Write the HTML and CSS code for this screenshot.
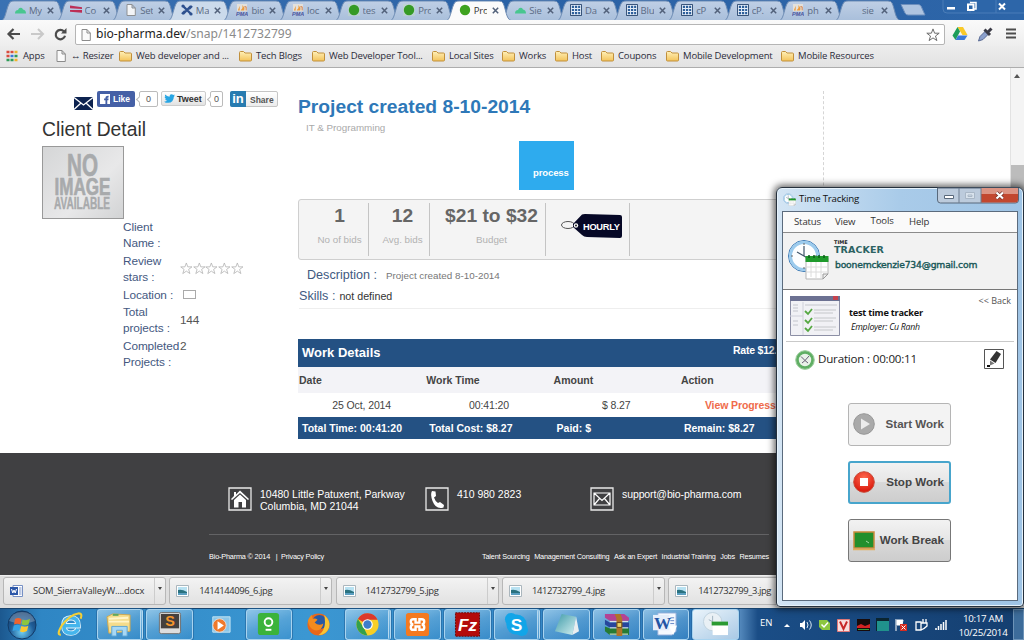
FILE: index.html
```html
<!DOCTYPE html>
<html lang="en">
<head>
<meta charset="utf-8">
<title>Project created 8-10-2014</title>
<link rel="stylesheet" href="styles.css">
</head>
<body>
<svg class="defs" width="0" height="0">
  <defs>
    <linearGradient id="gTab" x1="0" y1="0" x2="0" y2="1"><stop offset="0" stop-color="#bfcfe5"/><stop offset="1" stop-color="#a9bfdb"/></linearGradient>
    <linearGradient id="gFold" x1="0" y1="0" x2="0" y2="1"><stop offset="0" stop-color="#fff0b8"/><stop offset="1" stop-color="#f3c35a"/></linearGradient>
    <radialGradient id="gOrb" cx=".5" cy=".75" r=".7"><stop offset="0" stop-color="#6fd0f5"/><stop offset=".6" stop-color="#1f5d98"/><stop offset="1" stop-color="#17406f"/></radialGradient>
    <radialGradient id="gRed" cx=".5" cy=".3" r=".7"><stop offset="0" stop-color="#ff6a50"/><stop offset="1" stop-color="#d81408"/></radialGradient>
    <linearGradient id="gNote" x1="0" y1="0" x2="1" y2="1"><stop offset="0" stop-color="#3e9aa8"/><stop offset="1" stop-color="#d5f1f2"/></linearGradient>
    <symbol id="tab" viewBox="0 0 64 20" preserveAspectRatio="none"><path d="M0 20.5C4 19 5 3 9 1.6Q10 1 12 1H52Q55 1 56 3C59 9 59 19 64 20.5Z" stroke="#6f8db5" stroke-width="1"/></symbol>
    <symbol id="folder" viewBox="0 0 13 12"><path d="M.5 10V2.500Q.5 1.500 1.500 1.500H4.500L6 3H11.500Q12.500 3 12.500 4V10Q12.500 11 11.500 11H1.500Q.5 11 .5 10Z" fill="url(#gFold)" stroke="#c1903c"/></symbol>
    <symbol id="page" viewBox="0 0 10 12"><path d="M1 .5H6L9.300 4V11.500H1ZM6 .5V4H9.300" fill="#fafafa" stroke="#8b8b8b"/></symbol>
    <symbol id="cloud" viewBox="0 0 12 12"><path d="M1 9.500Q1 6 4 6Q5 3 8 4L9 5.500Q12 6 12 9.500Z" fill="#3dc787"/></symbol>
    <symbol id="flag" viewBox="0 0 13 12"><path d="M0 1L13 3V5L0 4ZM0 6L13 6V9L0 8Z" fill="#bd1f48"/></symbol>
    <symbol id="joom" viewBox="0 0 12 12"><path d="M2 2L10 10M10 2L2 10M1 10L4 7M8 5L11 2" stroke="#1d4285" stroke-width="2.400"/><circle cx="2" cy="2" r="1.600" fill="#1d4285"/><circle cx="10" cy="10" r="1.600" fill="#1d4285"/></symbol>
    <symbol id="pma" viewBox="0 0 13 13"><path d="M1 0H12V8H1Z" fill="#e8e4dc"/><path d="M2 7L4 2V7ZM5 7Q8 4 7 1Q10 4 9 7Z" fill="#f2962b"/><path d="M9 3H11V7" stroke="#d9712c" fill="none"/><text x="0" y="12.500" class="pma-t">PMA</text></symbol>
    <symbol id="dot" viewBox="0 0 12 12"><path d="M0 0H12V12H0Z" fill="#c3dcc4" opacity=".55"/><circle cx="6" cy="6" r="5.200" fill="#289611"/></symbol>
    <symbol id="dotw" viewBox="0 0 12 12"><circle cx="6" cy="6" r="5.200" fill="#2b9a08"/></symbol>
    <symbol id="gridi" viewBox="0 0 13 13"><path d="M.5 .5H12.500V12.500H.5Z" fill="#eaf1fa" stroke="#16355f"/><path d="M2 3H11M2 6.500H11M2 10H11" stroke="#1f5594" stroke-width="2.400" stroke-dasharray="2.400 1"/></symbol>
    <symbol id="img" viewBox="0 0 13 12"><path d="M.5 .5H12.500V11.500H.5Z" fill="#fff" stroke="#aab6bd"/><path d="M2 2H11V10H2Z" fill="#b9e2f2"/><path d="M2 5Q6 4 11 7V10H2Z" fill="#2a7280"/><path d="M2 8H11V10H2Z" fill="#5b9fc1"/></symbol>
    <symbol id="star" viewBox="0 0 14 14"><path d="M7 .9L8.600 5.200H13.200L9.500 8L10.900 12.600L7 9.900L3.100 12.600L4.500 8L.8 5.200H5.400Z" fill="#fff" stroke="#b4b4b4" stroke-width=".9"/></symbol>
    <symbol id="x" viewBox="0 0 7 7"><path d="M.8 .8L6.200 6.200M6.200 .8L.8 6.200" stroke="#52617a" stroke-width="1.500"/></symbol>
    <symbol id="clock" viewBox="0 0 42 42"><circle cx="17" cy="18" r="15.500" fill="#f4f9fd" stroke="#3a79b5" stroke-width="1"/><circle cx="17" cy="18" r="13.500" fill="#fdfeff" stroke="#9ccbed" stroke-width="3"/><path d="M17 18V8M17 18L10 14M17 18L22 21" stroke="#41566b" stroke-width="1.200"/><path d="M17 5V7M4 18H6M28 18H30M17 29V31" stroke="#666"/><path d="M19 20H41V36L36 41H19Z" fill="#fff" stroke="#b5b5b5"/><path d="M18.500 18H41.500V24H18.500Z" fill="#1f9a2c"/><path d="M22 17V20M27 17V20M32 17V20M37 17V20" stroke="#0d5d18" stroke-width="1.500"/><path d="M24 24V39M29 24V40M34 24V40M20 29H40M20 34H40" stroke="#dcdcdc"/><path d="M36 41V36H41Z" fill="#eee" stroke="#999"/></symbol>
  </defs>
</svg>

<header class="tabs">
  <div class="tab"><svg class="shape"><use href="#tab"/></svg><svg class="fav"><use href="#cloud"/></svg><span>My</span><svg class="x"><use href="#x"/></svg></div>
  <div class="tab"><svg class="shape"><use href="#tab"/></svg><svg class="fav"><use href="#flag"/></svg><span>Co</span><svg class="x"><use href="#x"/></svg></div>
  <div class="tab"><svg class="shape"><use href="#tab"/></svg><svg class="fav"><use href="#page"/></svg><span>Set</span><svg class="x"><use href="#x"/></svg></div>
  <div class="tab light"><svg class="shape"><use href="#tab"/></svg><svg class="fav"><use href="#joom"/></svg><span>Ma</span><svg class="x"><use href="#x"/></svg></div>
  <div class="tab"><svg class="shape"><use href="#tab"/></svg><svg class="fav"><use href="#pma"/></svg><span>bio</span><svg class="x"><use href="#x"/></svg></div>
  <div class="tab"><svg class="shape"><use href="#tab"/></svg><svg class="fav"><use href="#pma"/></svg><span>loc</span><svg class="x"><use href="#x"/></svg></div>
  <div class="tab"><svg class="shape"><use href="#tab"/></svg><svg class="fav"><use href="#dot"/></svg><span>tes</span><svg class="x"><use href="#x"/></svg></div>
  <div class="tab"><svg class="shape"><use href="#tab"/></svg><svg class="fav"><use href="#dot"/></svg><span>Pro</span><svg class="x"><use href="#x"/></svg></div>
  <div class="tab active"><svg class="shape"><use href="#tab"/></svg><svg class="fav"><use href="#dotw"/></svg><span>Pro</span><svg class="x"><use href="#x"/></svg></div>
  <div class="tab"><svg class="shape"><use href="#tab"/></svg><svg class="fav"><use href="#cloud"/></svg><span>Sie</span><svg class="x"><use href="#x"/></svg></div>
  <div class="tab"><svg class="shape"><use href="#tab"/></svg><svg class="fav"><use href="#gridi"/></svg><span>Da</span><svg class="x"><use href="#x"/></svg></div>
  <div class="tab"><svg class="shape"><use href="#tab"/></svg><svg class="fav"><use href="#gridi"/></svg><span>Blu</span><svg class="x"><use href="#x"/></svg></div>
  <div class="tab"><svg class="shape"><use href="#tab"/></svg><svg class="fav"><use href="#gridi"/></svg><span>cP</span><svg class="x"><use href="#x"/></svg></div>
  <div class="tab"><svg class="shape"><use href="#tab"/></svg><svg class="fav"><use href="#gridi"/></svg><span>cP.</span><svg class="x"><use href="#x"/></svg></div>
  <div class="tab"><svg class="shape"><use href="#tab"/></svg><svg class="fav"><use href="#pma"/></svg><span>ph</span><svg class="x"><use href="#x"/></svg></div>
  <div class="tab last"><svg class="shape"><use href="#tab"/></svg><svg class="fav"></svg><span>sie</span><svg class="x"><use href="#x"/></svg></div>
  <svg class="newtab" viewBox="0 0 26 12"><path d="M1 .5H18Q20 .5 21 2L25 11H8Q6 11 5 9Z" fill="#aec4e0" stroke="#6d8fbd"/></svg>
  <svg class="wctl" viewBox="0 0 90 14"><path d="M0 0V9Q0 13 4 13H86Q90 13 90 9V0M27 0V13M53 0V13" fill="#2d66a9" stroke="#4b7db8"/><path d="M4 7H12V9.500H4Z" fill="#fff"/><path d="M27 2.500H33V9H31" fill="none" stroke="#fff" stroke-width="1.500"/><path d="M25 4.500H30.500V10H25Z" fill="#2d66a9" stroke="#fff" stroke-width="2"/><path d="M56 3.500L62 9.500M62 3.500L56 9.500" stroke="#fff" stroke-width="2"/></svg>
</header>

<div class="toolbar">
  <svg class="nav" viewBox="0 0 70 22"><path d="M20 11H9M13.500 6L8.500 11L13.500 16" fill="none" stroke="#4c4c4c" stroke-width="2.200"/><path d="M31 11H42M38 6L43 11L38 16" fill="none" stroke="#c9c9c9" stroke-width="2"/><path d="M64 8.500A4.700 4.700 0 1 0 65 12.800" fill="none" stroke="#4c4c4c" stroke-width="2.200"/><path d="M66.500 5V10.500H61Z" fill="#4c4c4c"/></svg>
  <div class="omni"><svg class="pg"><use href="#page"/></svg><span class="url">bio-pharma.dev<i>/snap/1412732799</i></span><svg class="fs" viewBox="0 0 14 14"><path d="M7 .9L8.600 5.200H13.200L9.500 8L10.900 12.600L7 9.900L3.100 12.600L4.500 8L.8 5.200H5.400Z" fill="#fff" stroke="#6d6d6d"/></svg></div>
  <svg class="ext" viewBox="0 0 72 22"><path d="M5.500 4H11L15.500 12H10.500Z" fill="#f9c929"/><path d="M5.500 4L8 8.500L3.500 17L.5 12.500Z" fill="#1c9d5a"/><path d="M6 12.500H15.500L12.500 17H3.500Z" fill="#3b79d8"/><path d="M26.500 18L28 13.500L34 7.500L37 10.500L31 16.500Z" fill="#8ba0cc" stroke="#5a6b95"/><path d="M32.500 6.500L38 12M36 9L39.500 5.500" stroke="#3b3b46" stroke-width="3"/><path d="M54 6.500H64M54 10.500H64M54 14.500H64" stroke="#4c4c4c" stroke-width="2.200"/></svg>
</div>

<nav class="marks">
  <div><svg class="apps" viewBox="0 0 12 12"><path d="M.5 2H3.500M.5 6H3.500" stroke="#d94b3d" stroke-width="2.400"/><path d="M4.500 2H7.500" stroke="#d94b3d" stroke-width="2.400"/><path d="M8.500 2H11.500M8.500 10H11.500" stroke="#f0b32c" stroke-width="2.400"/><path d="M4.500 6H7.500" stroke="#3c78dc" stroke-width="2.400"/><path d="M8.500 6H11.500M4.500 10H7.500M.5 10H3.500" stroke="#2e9b57" stroke-width="2.400"/></svg>Apps</div>
  <div><svg class="mp"><use href="#page"/></svg>↔ Resizer</div>
  <div><svg><use href="#folder"/></svg>Web developer and ...</div>
  <div><svg><use href="#folder"/></svg>Tech Blogs</div>
  <div><svg><use href="#folder"/></svg>Web Developer Tool...</div>
  <div><svg><use href="#folder"/></svg>Local Sites</div>
  <div><svg><use href="#folder"/></svg>Works</div>
  <div><svg><use href="#folder"/></svg>Host</div>
  <div><svg><use href="#folder"/></svg>Coupons</div>
  <div><svg><use href="#folder"/></svg>Mobile Development</div>
  <div><svg><use href="#folder"/></svg>Mobile Resources</div>
</nav>

<main class="page">
  <aside class="side">
    <div class="share">
      <svg class="mail" viewBox="0 0 19 13"><path d="M0 0H19V13H0Z" fill="#0d2350"/><path d="M0 .5L9.500 8L19 .5M0 12.500L7 6M19 12.500L12 6" fill="none" stroke="#fff" stroke-width="1.300"/></svg>
      <span class="fb"><svg viewBox="0 0 11 11"><path d="M0 0H11V11H0Z" fill="#fff"/><path d="M6 11V7H4.500V5H6Q5.600 1.700 9.500 2V3.800Q8 3.600 8 5H9.500L9.200 7H8V11Z" fill="#4560a6"/></svg>Like</span>
      <span class="cnt c1">0</span>
      <span class="tw"><svg viewBox="0 0 12 10"><path d="M0 8.500Q2.500 8.500 3.500 7.600Q1.500 7 1.200 5.500H2.200Q.5 4.500 .6 3H1.500Q.4 1.800 1.200 .6Q3 3 6 3Q6 .3 8.300 .3Q9.500 .3 10 1L11.700 .6L11 2L12 1.800L10.800 3.200Q10.500 9.500 4.500 9.800Q1.500 9.800 0 8.500Z" fill="#27a5e3"/></svg>Tweet</span>
      <span class="cnt c2">0</span>
      <span class="li"><b>in</b><em>Share</em></span>
    </div>
    <h2>Client Detail</h2>
    <svg class="noimg" viewBox="0 0 80 71"><text x="24" y="29" textLength="31" lengthAdjust="spacingAndGlyphs" class="n1">NO</text><text x="11.500" y="48" textLength="56" lengthAdjust="spacingAndGlyphs" class="n2">IMAGE</text><text x="11" y="62" textLength="56" lengthAdjust="spacingAndGlyphs" class="n3">AVAILABLE</text></svg>
    <dl class="facts">
      <dt>Client<br>Name :</dt><dd></dd>
      <dt>Review<br>stars :</dt><dd class="stars"><svg><use href="#star"/></svg><svg><use href="#star"/></svg><svg><use href="#star"/></svg><svg><use href="#star"/></svg><svg><use href="#star"/></svg></dd>
      <dt>Location :</dt><dd><span class="flagbox"></span></dd>
      <dt>Total<br>projects :</dt><dd>144</dd>
      <dt>Completed<br>Projects :</dt><dd class="top">2</dd>
    </dl>
  </aside>
  <section class="project">
    <h1>Project created 8-10-2014</h1>
    <p class="cat">IT &amp; Programming</p>
    <div class="process">process</div>
    <div class="stats">
      <div class="s1"><b>1</b><span>No of bids</span></div>
      <div class="s2"><b>12</b><span>Avg. bids</span></div>
      <div class="s3"><b>$21 to $32</b><span>Budget</span></div>
      <div class="s4"><svg viewBox="0 0 62 26"><ellipse cx="7" cy="12" rx="6.500" ry="3.500" fill="none" stroke="#555"/><path d="M12 11L21 1.500Q22 1 24 1L59 2Q61 2 61 4V23Q61 25 59 25L26 24Q23 24 21 22L12 14Z" fill="#060826"/><circle cx="15" cy="12.500" r="2.200" fill="#fff"/><circle cx="15" cy="12.500" r="1" fill="#222"/></svg><em>HOURLY</em></div>
    </div>
    <p class="desc"><span class="lab">Description :</span><span>Project created 8-10-2014</span></p>
    <p class="skills"><span class="lab">Skills :</span><span>not defined</span></p>
    <table class="work">
      <colgroup><col class="wc"><col class="wc"><col class="wc"><col></colgroup>
      <thead>
        <tr class="cap"><th colspan="3">Work Details</th><th class="rate">Rate $12.</th></tr>
        <tr class="cols"><th>Date</th><th>Work Time</th><th>Amount</th><th>Action</th></tr>
      </thead>
      <tbody><tr><td>25 Oct, 2014</td><td>00:41:20</td><td>$ 8.27</td><td class="vp">View Progress</td></tr></tbody>
      <tfoot><tr><td>Total Time: 00:41:20</td><td>Total Cost: $8.27</td><td>Paid: $</td><td>Remain: $8.27</td></tr></tfoot>
    </table>
  </section>
  <div class="rule"></div>
  <div class="scroll"><i class="up"></i><i class="thumb"></i></div>
</main>

<footer class="foot">
  <div class="contacts">
    <div><svg viewBox="0 0 24 24"><path d="M1 1H23V23H1Z" fill="none" stroke="#e8e8e8" stroke-width="1.300"/><path d="M12 3.500L21 12L20 13L12 6L4 13L3 12L6 9V5H8V7.500Z" fill="#fff"/><path d="M6 13L12 7.500L18 13V20.500H14V15H10.500V20.500H6Z" fill="#fff"/></svg><span>10480 Little Patuxent, Parkway<br>Columbia, MD 21044</span></div>
    <div><svg viewBox="0 0 24 24"><path d="M1 1H23V23H1Z" fill="none" stroke="#e8e8e8" stroke-width="1.300"/><path d="M7 4L10.500 4.500L11 9L9 10.500Q10 14 13 16L15 15L19 18L18.500 20.500Q11 23 7.500 14Q5 7 7 4Z" fill="#fff"/></svg><span>410 980 2823</span></div>
    <div><svg viewBox="0 0 24 24"><path d="M1 1H23V23H1Z" fill="none" stroke="#e8e8e8" stroke-width="1.300"/><path d="M4 6H20V18H4ZM4 6L12 13.500L20 6M4 18L9.500 11.500M20 18L14.500 11.500" fill="none" stroke="#fff" stroke-width="1.200"/></svg><span class="em">support@bio-pharma.com</span></div>
  </div>
  <div class="legal"><span class="cr">Bio-Pharma © 2014 &nbsp; | &nbsp;Privacy Policy</span><span>Talent Sourcing</span><span>Management Consulting</span><span>Ask an Expert</span><span>Industrial Training</span><span>Jobs</span><span>Resumes</span></div>
</footer>

<div class="downloads">
  <div class="dl"><svg viewBox="0 0 13 12"><path d="M3 .5H12.500V11.500H3Z" fill="#fff" stroke="#7790c4"/><path d="M9 3H11.500M9 5H11.500M9 7H11.500M9 9H11.500" stroke="#5577bb" stroke-width=".8"/><path d="M0 2H8V10H0Z" fill="#2c57a8"/><path d="M1.500 4L2.800 8L4 5L5.200 8L6.500 4" fill="none" stroke="#fff"/></svg><span>SOM_SierraValleyW....docx</span><i></i></div>
  <div class="dl"><svg><use href="#img"/></svg><span>1414144096_6.jpg</span><i></i></div>
  <div class="dl"><svg><use href="#img"/></svg><span>1412732799_5.jpg</span><i></i></div>
  <div class="dl"><svg><use href="#img"/></svg><span>1412732799_4.jpg</span><i></i></div>
  <div class="dl"><svg><use href="#img"/></svg><span>1412732799_3.jpg</span><i></i></div>
</div>

<div class="taskbar">
  <svg class="orb" viewBox="0 0 32 32"><circle cx="16" cy="16" r="14" fill="url(#gOrb)" stroke="#123a66"/><path d="M3 12Q6 3 16 3T29 12Q16 17 3 12Z" fill="#fff" opacity=".25"/><path d="M9 10Q12 8 15.500 10L14.500 15.500Q11.500 14 8 15.500Z" fill="#f0642e"/><path d="M16.500 10.500Q20 12 24 10L22.500 15.500Q19 17 15.500 15.500Z" fill="#8cc63f"/><path d="M7.800 16.500Q11 15 14.300 16.500L13 22Q10 20.500 6.500 22Z" fill="#35a3e6"/><path d="M15.300 17Q19 18.500 22.300 16.800L21 22Q17.500 24 14 22.500Z" fill="#fbc72f"/></svg>
  <div class="task"><svg viewBox="0 0 28 26"><path d="M22 17.500Q19.500 22 14.500 22Q7 22 7 14Q7 6 14.500 6Q22 6 22 14.300H8" fill="none" stroke="#e4f5fd" stroke-width="5.500"/><path d="M22 17.500Q19.500 22 14.500 22Q7 22 7 14Q7 6 14.500 6Q22 6 22 14.300H8" fill="none" stroke="#45b5ec" stroke-width="3.800"/><path d="M4 23.500Q-1 24 5 14Q13 3 22 1.500Q27 1 24.500 7" fill="none" stroke="#f5cf35" stroke-width="2.200"/></svg></div>
  <div class="task open stack"><svg viewBox="0 0 28 26"><path d="M2 5L8 2L26 3V20L4 22Z" fill="#f5dc8b" stroke="#cda851"/><path d="M4 7L24 6M4 10H25" stroke="#fff4c8" stroke-width="2"/><path d="M8 3H14" stroke="#61a85b" stroke-width="2"/><path d="M7 25V15H23V25H18V19H12V25Z" fill="#a7d8f5" stroke="#5ca4d3"/></svg></div>
  <div class="task open"><svg viewBox="0 0 28 26"><rect x="3.500" y=".5" width="22" height="22" rx="2" fill="#ddd" stroke="#707070"/><path d="M5 2H24V17H5Z" fill="#45403e"/><text x="14.500" y="14.500" class="ic sub">S</text></svg></div>
  <div class="task"><svg viewBox="0 0 28 26"><path d="M7 5H25V21H7Z" fill="#8ac6e9" stroke="#c5e5f5"/><circle cx="14" cy="14" r="7" fill="#f0792b" stroke="#ddd"/><path d="M12 9.500L18.500 14L12 18.500Z" fill="#fff"/></svg></div>
  <div class="task open"><svg viewBox="0 0 28 26"><rect x="3" y="1" width="22" height="23" rx="3" fill="#3bb33b"/><circle cx="14" cy="10.500" r="4" fill="none" stroke="#fff" stroke-width="2"/><path d="M11 18.500H17" stroke="#fff" stroke-width="2"/></svg></div>
  <div class="task"><svg viewBox="0 0 28 26"><circle cx="14" cy="13" r="11.500" fill="#e8671b"/><circle cx="15" cy="10.500" r="7.500" fill="#2859a4"/><path d="M3 9Q5 4 7 3L8 7Q11 6 13 8L10 11Q14 15 19 12Q18 20 10 19Q4 17 3 9Z" fill="#f38b1d"/><path d="M20 3Q27 9 25 16Q22 24 14 24Q23 18 20 3Z" fill="#f9c534"/></svg></div>
  <div class="task open stack"><svg viewBox="0 0 28 26"><circle cx="14" cy="13" r="11.500" fill="#f7cf25"/><path d="M14 13L4 7.300A11.500 11.500 0 0 1 24.500 8H14Z" fill="#dc392c"/><path d="M4 7.300L10 16L14 24.500A11.500 11.500 0 0 1 4 7.300Z" fill="#33a04c"/><circle cx="14" cy="13" r="5.500" fill="#fff"/><circle cx="14" cy="13" r="4.300" fill="#3c7dcb"/></svg></div>
  <div class="task open"><svg viewBox="0 0 28 26"><rect x="2" y="1" width="24" height="24" rx="3" fill="#f47a20"/><path d="M9.500 7.500H12V11H16V7.500H18.500Q21 7.500 21 10T18.500 13Q21 13.500 21 16T18.500 18.500H16V15H12V18.500H9.500Q7 18.500 7 16T9.500 13Q7 12.500 7 10T9.500 7.500Z" fill="none" stroke="#fff" stroke-width="2.500"/></svg></div>
  <div class="task open"><svg viewBox="0 0 28 26"><path d="M1.500 .8H26.500V25.200H1.500Z" fill="#b30b0b" stroke="#6e0808" stroke-dasharray="2 1"/><text x="14" y="20" class="ic fz">Fz</text></svg></div>
  <div class="task open stack"><svg viewBox="0 0 28 26"><circle cx="14" cy="13" r="10.500" fill="#12a5e8"/><circle cx="8.500" cy="7.500" r="6.500" fill="#12a5e8"/><circle cx="19.500" cy="18.500" r="6.500" fill="#12a5e8"/><text x="14" y="19.500" class="ic sky">S</text></svg></div>
  <div class="task open"><svg viewBox="0 0 28 26"><path d="M9 2L24 5L20 24L2 20Z" fill="url(#gNote)"/><path d="M24 5L27 20L20 24Z" fill="#e9eef0"/></svg></div>
  <div class="task open"><svg viewBox="0 0 28 26"><path d="M2 2H22L27 6V9H7L2 6Z" fill="#b34394"/><path d="M2 8L7 11H27V16H7L2 13Z" fill="#27469c"/><path d="M2 15L7 17H27V24H7L2 20Z" fill="#267b34"/><path d="M7 10H26M7 16.500H26M7 23H26" stroke="#eee"/><path d="M12 2H18L20 7V25H14V7Z" fill="#af7429"/><path d="M14.500 11H19.500V16H14.500Z" fill="#ead168" stroke="#66491e"/></svg></div>
  <div class="task open"><svg viewBox="0 0 28 26"><path d="M6 1H25V20L21 24H6Z" fill="#f6f9fe" stroke="#8eaad8"/><path d="M19 6H23M19 9H23M19 12H23" stroke="#6788c7"/><path d="M1 3H18V19H1Z" fill="#e5edfa"/><text x="11" y="18" class="ic word">W</text><path d="M18 15L26 14L22 24Z" fill="#fff"/></svg></div>
  <div class="task open sel"><svg viewBox="0 0 28 26"><circle cx="11" cy="10" r="9.500" fill="#e9f0f5" stroke="#c0d2df"/><path d="M11 4V10L7 8" fill="none" stroke="#9fb2c0"/><path d="M11 11H27V24H11Z" fill="#fff"/><path d="M10 10H27V14H10Z" fill="#2a9a33"/></svg></div>
  <span class="lang">EN</span>
  <svg class="tray" viewBox="0 0 170 22"><path d="M2 13L5 10L8 13Z" fill="#fff"/><path d="M18 9H20L23 6V16L20 13H18Z" fill="#fff"/><path d="M25 8Q27 11 25 14M27.500 6.500Q31 11 27.500 15.500" stroke="#dce9f5" fill="none"/><path d="M37 6H45L48 9V16H40L37 13Z" fill="#8cc63f"/><path d="M39.500 10.500L42 13L46 8.500" stroke="#fff" fill="none" stroke-width="1.500"/><path d="M55.500 5.500H67.500V17.500H55.500Z" fill="#f7dede" stroke="#d77"/><path d="M58 7.500L61.500 15L65 7.500" fill="none" stroke="#c72828" stroke-width="2"/><path d="M75 5H88V17H75Z" fill="#180b0b"/><path d="M75 12L79 10L83 12L88 10V14H75Z" fill="#d42323"/><path d="M76 15.500H87" stroke="#3a9a3a"/><path d="M94 4H107V17H94Z" fill="#0b2530"/><path d="M95 7H107V17H95Z" fill="#20928c"/><path d="M114 5V17M115 6H121L120 11H115Z" fill="#fff" stroke="#fff"/><rect x="118" y="10" width="7" height="7" fill="#d62d20"/><path d="M119.500 11.500L123.500 15.500M123.500 11.500L119.500 15.500" stroke="#fff"/><path d="M134 8H139V16H134ZM141 5V9M144 5V9M139.500 9H145V12Q142 15 139 16" fill="none" stroke="#fff" stroke-width="1.300"/><path d="M154 16V14M156.500 16V12M159 16V10M161.500 16V8M164 16V6" stroke="#fff" stroke-width="1.500"/></svg>
  <div class="time">10:17 AM<br>10/25/2014</div>
  <div class="peek"></div>
</div>

<div class="win">
  <div class="wtitle"><svg class="wi"><use href="#clock"/></svg><span>Time Tracking</span>
    <svg class="wbtn" viewBox="0 0 82 16"><path d="M.5 0V12Q.5 15 3.500 15H78.500Q81.500 15 81.500 12V0Z" fill="#bccbdc" stroke="#58697c"/><path d="M44 0H81V12Q81 14.500 78.500 14.500H44Z" fill="#c2472f"/><path d="M44 0H81V6H44Z" fill="#dc9484"/><path d="M22 0V15M44 0V15" stroke="#6d7d90"/><path d="M7.500 7.500H16.500V10.500H7.500Z" fill="#fff" stroke="#59697b"/><path d="M28.500 4.500H37.500V10.500H28.500ZM31 7H35V8.500H31Z" fill="#d8e2ec" stroke="#a9b7c6"/><path d="M59.500 4.500L66 10.500M66 4.500L59.500 10.500" stroke="#71312a" stroke-width="3.600"/><path d="M59.500 4.500L66 10.500M66 4.500L59.500 10.500" stroke="#fff" stroke-width="2.200"/></svg>
  </div>
  <div class="wbody">
    <div class="wmenu"><span>Status</span><span>View</span><span class="up1">Tools</span><span>Help</span></div>
    <div class="whead"><svg class="logo"><use href="#clock"/></svg><div><small>TIME</small><strong>TRACKER</strong><b>boonemckenzie734@gmail.com</b></div></div>
    <div class="wtask">
      <svg viewBox="0 0 50 40"><path d="M.5 .5H49.500V39.500H.5Z" fill="#f1f1f5" stroke="#8c8fa5"/><path d="M0 0H50V5H0Z" fill="#6c7192"/><path d="M43 0H48V4H43Z" fill="#c5434e"/><path d="M13 6V39M0 20H13" stroke="#cfd0da"/><path d="M15 9H47M3 9H8M3 12H8M3 15H8M3 25H8M3 29H8" stroke="#c3c5cc"/><path d="M24 14H46M24 17H43M24 22H46M24 25H43M24 31H46M24 34H43" stroke="#c5c7ca"/><path d="M15 15L18 18L22 13M15 24L18 27L22 22M15 32L18 35L22 30" fill="none" stroke="#56a842" stroke-width="1.800"/></svg>
      <div class="tt"><b>test time tracker</b><i>Employer: Cu Ranh</i></div><span class="back">&lt;&lt; Back</span>
    </div>
    <div class="dur"><svg class="dc" viewBox="0 0 20 20"><circle cx="10" cy="10" r="7.800" fill="#e9f2e9" stroke="#5fae63" stroke-width="3.200"/><circle cx="10" cy="10" r="9.300" fill="none" stroke="#a5d2a5"/><path d="M6 6.500L10 10.500L14 6M10 10.500L7 13M10 10.500L13 13" stroke="#685f75" fill="none"/></svg><span>Duration : 00:00:11</span><svg class="pen" viewBox="0 0 20 20"><path d="M.5 .5H19.500V19.500H.5Z" fill="#fff" stroke="#555"/><path d="M12.500 2L17 5L11.500 14L6 10.500Z" fill="#333"/><path d="M6 11.500L10.500 14.500L6 16.500Z" fill="#777"/><path d="M3 17H6" stroke="#111" stroke-width="2"/></svg></div>
    <div class="btns">
      <button class="dis"><svg viewBox="0 0 22 22"><circle cx="11" cy="11" r="10.300" fill="#aaa" stroke="#989898"/><path d="M8 5.500L17 11L8 16.500Z" fill="#ececec"/></svg><span>Start Work</span></button>
      <button class="foc"><svg viewBox="0 0 22 22"><circle cx="11" cy="11" r="10.300" fill="url(#gRed)" stroke="#c94a38"/><path d="M7 7H15V15H7Z" fill="#fff"/></svg><span>Stop Work</span></button>
      <button><svg viewBox="0 0 22 22"><path d="M1 3H21V19H1Z" fill="#228f2c" stroke="#c98b3b" stroke-width="1.500"/><path d="M0 20.500H22" stroke="#e3ae5b" stroke-width="1.500"/><path d="M13 12L16 14" stroke="#a7dba7"/></svg><span>Work Break</span></button>
    </div>
  </div>
</div>
</body>
</html>
```
FILE: styles.css
```css
* { box-sizing: border-box; }
html, body { margin: 0; width: 1024px; height: 640px; overflow: hidden; }
body { display: flex; flex-direction: column; position: relative; background: #fff; font-family: "Liberation Sans", sans-serif; color: #333; }
h1, h2, p, dl, dd { margin: 0; }
i, em { font-style: normal; }
svg { display: block; flex: none; overflow: visible; }
.defs { position: absolute; }

/* browser tabs */
.tabs { height: 20px; flex: none; display: flex; padding-left: 2px; background: linear-gradient(90deg, #3a72b3, #2a62a6 50%, #2d65a8); font-family: "Open Sans", sans-serif; }
.tab { position: relative; width: 55.600px; height: 20px; flex: none; display: flex; align-items: center; padding-left: 12px; color: #5b6b84; font-size: 9.500px; }
.tab .shape { position: absolute; left: 0; top: 0; width: 64px; height: 20px; fill: url(#gTab); }
.tab .fav { width: 12px; height: 12px; position: relative; opacity: .9; }
.tab span { position: relative; width: 13px; margin-left: 3px; overflow: hidden; white-space: nowrap; letter-spacing: -.2px; }
.tab .x { position: relative; width: 7px; height: 7px; margin-left: 5px; }
.tab.light .shape { fill: #cbdaeb; }
.tab.active { z-index: 2; color: #333; }
.tab.active .shape { fill: #fbfbfb; }
.tab.last span { margin-left: 2px; width: 14px; }
.tab.last .x { margin-left: 5px; }
.pma-t { font: italic bold 6px "Liberation Sans", sans-serif; fill: #3d4796; }
.newtab { width: 26px; height: 12px; margin: 4px 0 0 8px; }
.wctl { width: 90px; height: 14px; margin-left: 17px; }

.toolbar { height: 26px; flex: none; display: flex; align-items: center; background: linear-gradient(#fafafa, #eee); }
.nav { width: 70px; height: 22px; margin-top: 2px; }
.omni { margin: 3px 0 0 5px; width: 870px; height: 21px; display: flex; align-items: center; background: #fff; border: 1px solid #b5b5b5; border-radius: 2px; padding: 0 4px; }
.pg { width: 10px; height: 12px; margin-left: 1px; }
.url { font: 12.100px/16px "Noto Sans", sans-serif; color: #222; margin-left: 5px; flex: 1; position: relative; top: -1px; }
.url i { color: #8a8a8a; }
.fs { width: 14px; height: 14px; }
.ext { width: 72px; height: 22px; margin: 2px 0 0 7px; }

.marks { height: 22px; flex: none; display: grid; grid-template-columns: 50px 63px 120px 73px 120px 70px 53px 46px 65px 115px auto; padding: 0 0 2px 6px; background: linear-gradient(#ededed, #e2e2e2); border-bottom: 1px solid #adadad; font: 9.500px "Open Sans", sans-serif; letter-spacing: -.15px; color: #2c2c3a; white-space: nowrap; }
.marks div { display: flex; align-items: center; gap: 4px; }
.marks svg { width: 13px; height: 12px; }
.marks .apps { width: 12px; margin-right: 1px; }
.marks .mp { width: 10px; margin-right: 1px; }

/* page */
.page { height: 385px; flex: none; display: flex; overflow: hidden; background: #fff; }
.side { width: 298px; padding: 23px 0 0 42px; }
.share { display: flex; align-items: flex-start; margin-left: 32px; height: 27px; font-size: 9px; }
.mail { width: 19px; height: 13px; margin-top: 6px; }
.fb { width: 38px; height: 16px; margin-left: 4px; background: #4560a6; border-radius: 2px; color: #fff; font-weight: bold; display: flex; align-items: center; gap: 3px; padding-left: 3px; font-size: 8.500px; }
.fb svg { width: 10px; height: 10px; }
.cnt { border: 1px solid #bbb; border-radius: 2px; height: 16px; line-height: 14px; text-align: center; background: #fff; color: #555; position: relative; }
.cnt::before { content: ""; position: absolute; left: -3px; top: 5px; width: 4px; height: 4px; background: #fff; border: 1px solid #bbb; border-width: 0 0 1px 1px; transform: rotate(45deg); }
.c1 { width: 19px; margin-left: 4px; }
.c2 { width: 13px; margin-left: 4px; }
.tw { width: 45px; height: 15px; margin-left: 3px; border: 1px solid #ccc; border-radius: 2px; background: linear-gradient(#fff, #e2e2e2); font-weight: bold; display: flex; align-items: center; font-size: 9px; gap: 2px; padding-left: 2px; }
.tw svg { width: 11px; height: 9px; }
.li { display: flex; width: 48px; margin-left: 7px; height: 16px; border: 1px solid #c5c5c5; border-radius: 2px; line-height: 14px; background: linear-gradient(#fff, #ececec); }
.li b { width: 16px; margin: -1px 0 -1px -1px; background: #287bb0; color: #fff; font-size: 13px; text-align: center; border-radius: 2px 0 0 2px; line-height: 16px; }
.li em { font-weight: bold; font-size: 8.500px; color: #555; margin-left: 4px; line-height: 16px; }
.side h2 { font-weight: normal; font-size: 19.300px; line-height: 24px; height: 28px; color: #333; white-space: nowrap; }
.noimg { width: 82px; height: 73px; border: 1px solid #999; background: linear-gradient(135deg, #d5d6d7, #e8e8e9 60%, #d2d3d4); font-weight: bold; font-family: "Liberation Sans", sans-serif; fill: #a8aaac; stroke: #a8aaac; stroke-width: .7px; }
.n1 { font-size: 32px; }
.n2 { font-size: 23.500px; }
.n3 { font-size: 16.500px; stroke-width: .4px; }
.facts { display: grid; grid-template-columns: 57px auto; row-gap: 1.800px; margin-left: 81px; font-size: 11.800px; line-height: 16px; color: #555; }
.facts dt { color: #44587f; white-space: nowrap; letter-spacing: -.1px; }
.facts dd { align-self: center; letter-spacing: -.2px; }
.facts .top { align-self: start; }
.stars { display: flex; }
.stars svg { width: 12.700px; height: 13px; }
.flagbox { display: block; width: 13px; height: 9px; border: 1px solid #aaa; margin-left: 3px; }

.project { width: 524px; flex: none; }
.project h1 { margin-top: 27px; font-size: 19.250px; line-height: 24px; color: #2e78b8; white-space: nowrap; }
.cat { font-size: 9.800px; line-height: 12px; color: #a9a9a9; margin: 3px 0 0 8px; }
.process { width: 55px; height: 49px; margin: 7px 0 0 221px; background: #2eabee; color: #fff; font-weight: bold; font-size: 9.500px; letter-spacing: -.1px; padding: 26px 0 0 14px; line-height: 12px; }
.stats { height: 61px; margin-top: 9px; border: 1px solid #cfcfcf; border-radius: 3px; background: #f4f4f4; display: flex; padding: 3px 0 3px 1px; }
.stats > div { border-right: 1px solid #c4c4c4; height: 53px; text-align: center; white-space: nowrap; }
.stats b { display: block; font-size: 19.200px; line-height: 20px; color: #666; margin-top: 3px; }
.stats span { display: block; font-size: 9.800px; line-height: 12px; color: #b2b2b2; margin-top: 8px; }
.s1 { width: 69px; padding-left: 11px; }
.s2 { width: 61px; padding-left: 7px; }
.s3 { width: 116px; padding-left: 8px; }
.s4 { width: 84px; position: relative; padding: 10px 0 0 15px; }
.s4 svg { width: 62px; height: 26px; }
.s4 em { position: absolute; left: 37px; top: 18px; color: #fff; font-weight: bold; font-size: 9.300px; line-height: 12px; letter-spacing: -.3px; }
.desc { margin: 7px 0 0 9px; height: 18px; font-size: 9.850px; color: #777; line-height: 17px; display: flex; gap: 9px; white-space: nowrap; }
.skills { height: 24px; padding-top: 3px; margin-left: 1px; font-size: 10.700px; line-height: 17px; display: flex; gap: 4px; border-bottom: 1px solid #eee; white-space: nowrap; }
.lab { font-size: 12.600px; color: #41597f; }
.work { width: 524px; table-layout: fixed; border-collapse: collapse; margin-top: 30px; font-size: 10.500px; }
.wc { width: 127.300px; }
.work th, .work td { padding: 0; text-align: left; white-space: nowrap; }
.work .cap { height: 28px; background: #245183; color: #fff; }
.work .cap th { padding-left: 4px; font-size: 13px; padding-bottom: 1px; }
.work .cap .rate { font-size: 10.500px; padding: 0 0 6px 53px; letter-spacing: -.2px; }
.work .cols { height: 26px; background: #f3f3f7; color: #444; }
.work .cols th { padding: 0 0 1px 1px; }
.work tbody tr { height: 24px; color: #444; }
.work tbody td { text-align: center; letter-spacing: -.1px; }
.work tbody .vp { color: #ef6b4b; font-weight: bold; text-align: left; padding-left: 25px; }
.work tfoot tr { height: 22px; background: #245183; color: #fff; font-weight: bold; }
.work tfoot td { padding-left: 4px; }
.rule { width: 1px; margin: 23px 0 0 1px; border-left: 1px dashed #d5d5d5; height: 130px; }
.scroll { width: 14px; margin-left: auto; background: #f4f4f4; border-left: 1px solid #e2e2e2; padding: 6px 2px; }
.up { display: block; width: 0; border: 3px solid transparent; border-bottom: 4px solid #555; border-top: 0; margin-left: 1px; }
.thumb { display: block; height: 60px; margin: 87px -2px 0; background: #bcbcbc; }

.foot { height: 122px; flex: none; background: #404042; color: #fff; padding: 34px 0 0 209px; }
.contacts { display: grid; grid-template-columns: 197px 165px auto; padding-left: 19px; width: 560px; height: 48px; border-bottom: 1px solid #636365; font-size: 10.500px; line-height: 12px; white-space: nowrap; }
.contacts div { display: flex; gap: 8px; }
.contacts svg { width: 24px; height: 24px; }
.contacts span { padding-top: 1px; }
.contacts .em { letter-spacing: -.1px; }
.legal { display: flex; width: 560px; padding-top: 16px; font-size: 7.300px; line-height: 12px; letter-spacing: -.18px; white-space: nowrap; gap: 4.500px; }
.cr { margin-right: auto; }

.downloads { height: 34px; flex: none; background: #dedede; border-top: 1px solid #efefef; padding: 1px 3px; display: flex; gap: 3.300px; font: 9.450px "Open Sans", sans-serif; color: #333; overflow: hidden; }
.dl { width: 163px; height: 28px; flex: none; display: flex; align-items: center; background: linear-gradient(#f3f3f3, #e2e2e2); border: 1px solid #b7b7b7; border-radius: 3px; padding-left: 6px; }
.dl svg { width: 13px; height: 12px; }
.dl span { margin-left: 10px; flex: 1; letter-spacing: -.4px; white-space: nowrap; position: relative; top: -1px; }
.dl:first-child span { letter-spacing: -.2px; }
.dl i { width: 11px; height: 26px; border-left: 1px solid #ccc; padding: 9px 0 0 3px; }
.dl i::before { content: ""; display: block; width: 0; border: 2px solid transparent; border-top: 3px solid #444; border-bottom: 0; }

.taskbar { height: 32px; flex: none; margin-top: -1px; display: flex; background: linear-gradient(90deg, #1c588f, #2f86c4 4%, #3b97d2 30%, #3484c4 60%, #2f78ba 69%, #5c91c4 72%, #1a4d86 74%, #153f70); border-top: 1px solid #17436d; }
.orb { width: 32px; height: 32px; margin: 0 9px 0 6px; }
.task { width: 46.600px; height: 31px; margin-right: 3.060px; display: flex; flex: none; align-items: center; justify-content: center; border-radius: 3px; }
.task svg { width: 27px; height: 25px; }
.open { background: linear-gradient(160deg, #b6dcf3b0, #7ab5df70 50%, #3c8bc850); border: 1px solid #a8d3ef; box-shadow: 0 0 0 1px #1f5f9690; }
.stack { border-right: 3px double #b5d9f0; }
.sel { background: linear-gradient(150deg, #eaf4fb, #a9c9e5); }
.ic { text-anchor: middle; font-family: "Liberation Sans", sans-serif; font-weight: bold; fill: #fff; }
.sub { font-size: 15px; fill: #f5962c; }
.fz { font-size: 18px; font-style: italic; }
.sky { font-size: 18px; }
.word { font-family: "Liberation Serif", serif; font-size: 18px; fill: #2354a4; }
.lang { color: #fff; font: 9.500px/28px "Open Sans", sans-serif; margin-left: 18px; width: 22px; }
.tray { width: 170px; height: 22px; margin: 5px 0 0; }
.time { color: #fff; font: 9.800px/13.500px "Open Sans", sans-serif; text-align: center; width: 60px; margin: 3px 0 0 1px; letter-spacing: -.3px; white-space: nowrap; }
.peek { width: 11px; border: 1px solid #6d93b7; background: #3d6c9a; margin-left: auto; }

/* floating tracker window */
.win { position: absolute; left: 776px; top: 187px; width: 248px; height: 420px; border: 1px solid #26313d; border-radius: 6px 6px 4px 4px; background: linear-gradient(90deg, #d4e5f4, #a9cbe9 50%, #9fc4e5); box-shadow: 0 0 7px 2px #000000a0, inset 0 0 0 1px #e6f2fb; font-family: "Open Sans", sans-serif; z-index: 5; }
.wtitle { height: 23px; display: flex; align-items: center; padding-left: 6px; font-size: 9.700px; color: #111; }
.wi { width: 13px; height: 13px; margin-right: 3px; }
.wtitle span { letter-spacing: -.2px; position: relative; top: -1px; }
.wbtn { width: 82px; height: 16px; margin: 0 0 7px auto; align-self: flex-start; position: relative; right: 4px; }
.wbody { margin: 0 5px; height: 390px; border: 1px solid #5b6b7d; background: #fff; }
.wmenu { height: 21px; display: flex; font-size: 9.600px; line-height: 19px; border-bottom: 1px solid #8b8b8b; background: #fafafa; padding-left: 11px; }
.wmenu span { width: 41px; letter-spacing: -.15px; }
.wmenu span:nth-child(2) { width: 35.500px; }
.wmenu span:nth-child(3) { width: 38.500px; }
.up1 { margin-top: -1px; }
.whead { height: 57px; display: flex; background: #f2f2f2; border-bottom: 1px solid #777; padding: 5px 0 0 4px; }
.logo { width: 42px; height: 42px; }
.whead div { margin-left: 5px; display: flex; flex-direction: column; color: #195858; font-family: "DejaVu Sans", sans-serif; }
.whead small { font-size: 5px; line-height: 5px; font-weight: bold; color: #222; margin-top: 2px; }
.whead strong { font-size: 9.500px; line-height: 9px; letter-spacing: .1px; color: #2c6262; }
.whead div b { font-size: 9.200px; line-height: 12px; margin: 5px 0 0 1px; letter-spacing: -.18px; font-weight: normal; -webkit-text-stroke: .4px #195858; }
.wtask { height: 52px; margin: 0 3px; border-bottom: 1px solid #c9c9c9; display: flex; padding: 6px 0 0 4px; position: relative; }
.wtask svg { width: 50px; height: 40px; }
.tt { display: flex; flex-direction: column; margin: 9px 0 0 9px; font-size: 9.200px; line-height: 15px; white-space: nowrap; color: #111; letter-spacing: -.22px; }
.tt i { font-style: italic; font-size: 8.700px; margin-left: 2px; }
.back { font-size: 9px; position: absolute; right: 3px; top: 5px; color: #555; line-height: 12px; white-space: nowrap; }
.dur { height: 35px; display: flex; align-items: center; padding: 0 13px 0 12px; }
.dc { width: 20px; height: 20px; margin-right: 3px; }
.dur span { flex: 1; font-size: 11.600px; color: #222; letter-spacing: -.2px; position: relative; top: -1px; }
.pen { width: 20px; height: 20px; position: relative; top: -1px; }
.btns { display: flex; flex-direction: column; gap: 15px; margin: 26px 0 0 65px; }
.btns button { width: 103px; height: 43px; border: 1px solid #777; border-radius: 3px; background: linear-gradient(#f2f2f2, #e6e6e6 48%, #d9d9d9 50%, #cdcdcd); display: flex; align-items: center; padding: 0 6px 2px 4px; font: bold 11.600px "Liberation Sans", sans-serif; color: #444; }
.btns svg { width: 22px; height: 22px; }
.btns span { margin-left: auto; white-space: nowrap; }
.btns .dis { background: #f3f3f3; border-color: #b5b5b5; color: #555; }
.btns .foc { border: 2px solid #47a5cc; padding: 0 5px 2px 3px; }
```
